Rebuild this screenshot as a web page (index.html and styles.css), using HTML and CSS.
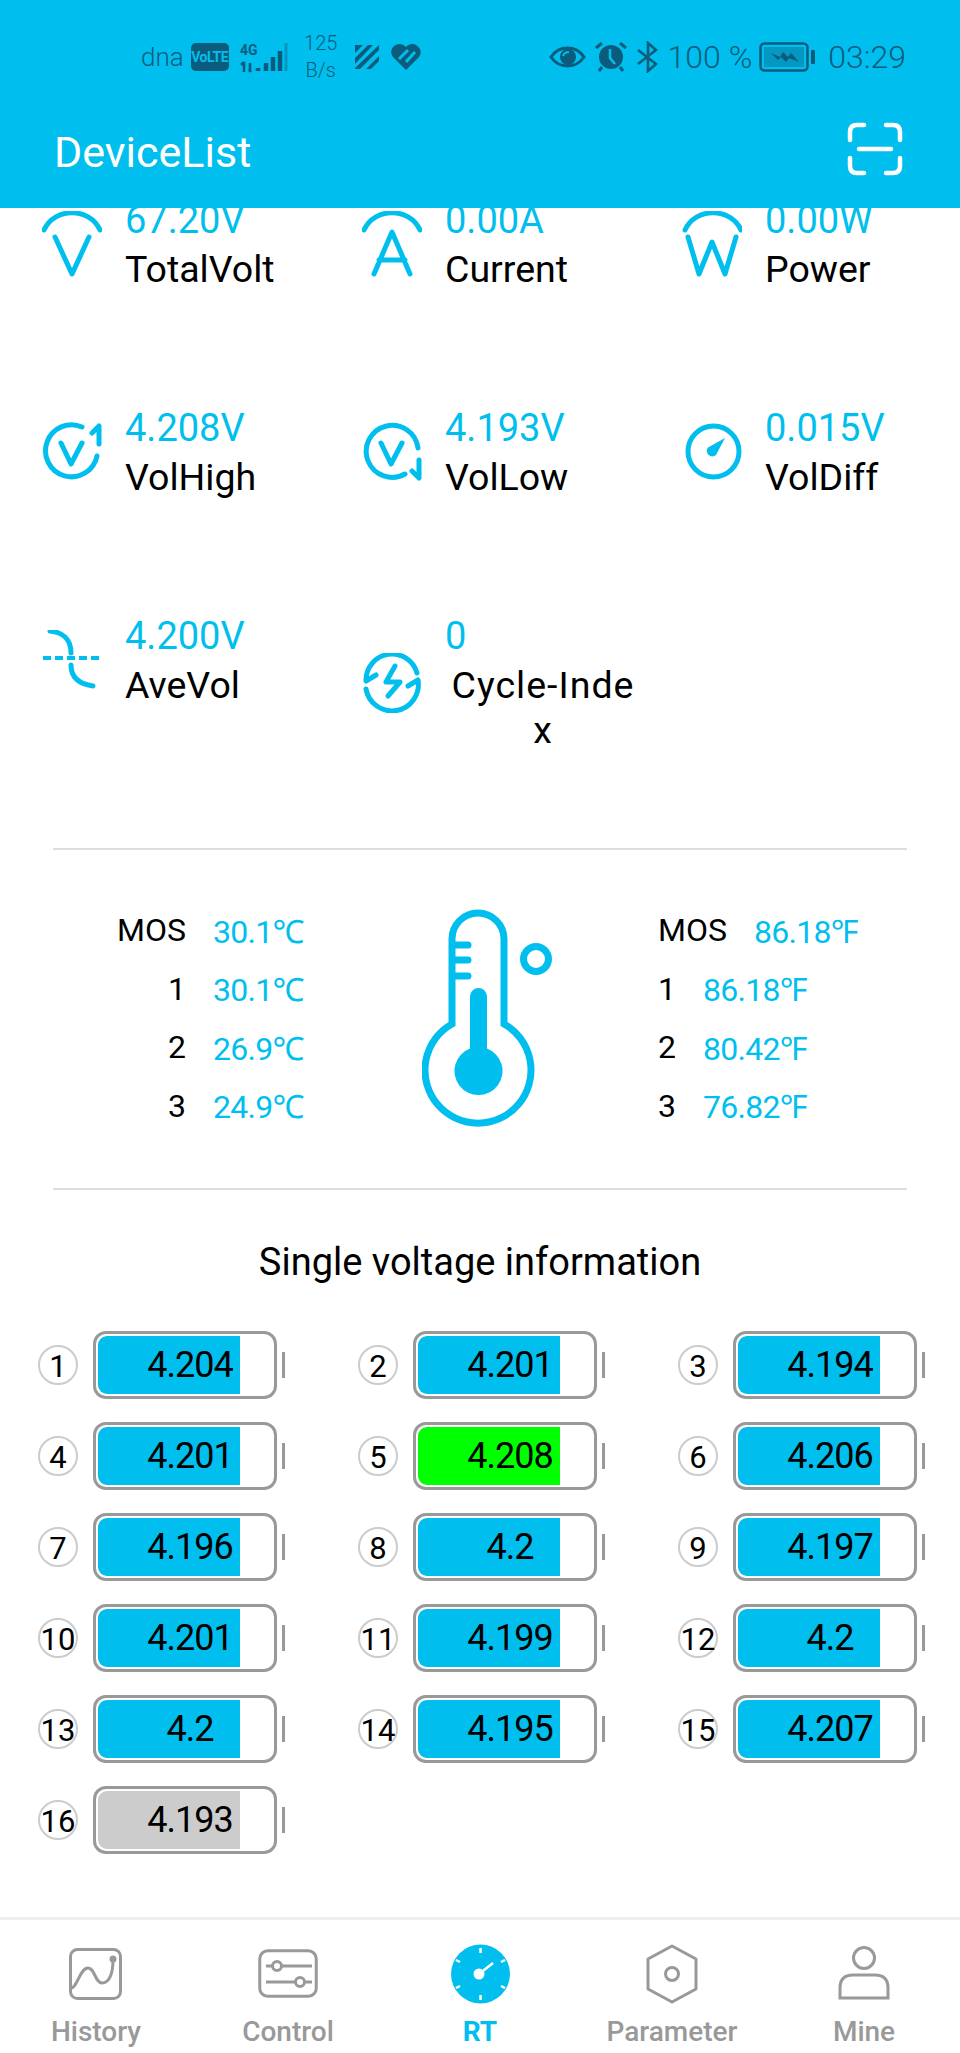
FILE: index.html
```html
<!DOCTYPE html>
<html lang="en">

<head>
  <meta charset="UTF-8">
  <meta name="viewport" content="width=device-width, initial-scale=1.0">
  <title>DeviceList</title>
  <link rel="stylesheet" href="styles.css">
</head>

<body>
  <div class="phone">
    <header class="top">
      <div class="status">
        <div class="status-left">
          <span class="carrier">dna</span>
          <span class="volte">VoLTE</span>
          <svg class="signal" width="48" height="32" viewBox="0 0 48 32">
            <text x="0" y="14" class="signal-4g">4G</text>
            <path d="M4 21v10M1 24l3-3M10 22v9M9 28l2 3" stroke="#0b5c7c" stroke-width="2.6" fill="none"/>
            <path d="M18 27v3M26 22v8M33 16v14M40 10v20" stroke="#0b5c7c" stroke-width="4.5" fill="none"/>
            <path d="M46 2v28" stroke="#0b5c7c" stroke-opacity=".4" stroke-width="3" fill="none"/>
          </svg>
          <span class="speed">125<br>B/s</span>
          <svg class="stripes" width="24" height="26" viewBox="0 0 24 26">
            <path d="M0 1h8L0 9zM13 1h5L0 20v-6zM24 1v5L5 25H0v-1zM24 12v5l-8 8h-5z" fill="#0b5c7c"/>
          </svg>
          <svg class="heart" width="30" height="26" viewBox="0 0 30 26">
            <path d="M15 26L2 13C-2 8 1 1 8 0c3 0 5 1 7 3 3-3 7-4 10-2 5 3 6 8 3 12z" fill="#0b5c7c"/>
            <path d="M17 6l-9 9M24 8l-9 10" stroke="#00bfee" stroke-width="3" fill="none"/>
          </svg>
        </div>
        <div class="status-right">
          <svg width="37" height="24" viewBox="0 0 37 24">
            <path d="M2 12C10 0 27 0 35 12 27 24 10 24 2 12z" fill="none" stroke="#0b5c7c" stroke-width="3"/>
            <circle cx="19" cy="12" r="8" fill="#0b5c7c"/>
            <path d="M14 11c1-3 3-4 6-4" stroke="#00bfee" stroke-width="2" fill="none"/>
          </svg>
          <svg width="32" height="30" viewBox="0 0 32 30">
            <circle cx="16" cy="15" r="12" fill="#0b5c7c"/>
            <path d="M15 7v9l5 6" stroke="#00bfee" stroke-width="2.5" fill="none"/>
            <path d="M1 6l6-5M31 6l-6-5M7 25l-3 4M25 25l3 4" stroke="#0b5c7c" stroke-width="3" fill="none"/>
          </svg>
          <svg width="23" height="32" viewBox="0 0 23 32">
            <path d="M2 9l18 14-8 7V2l8 7L2 23" fill="none" stroke="#0b5c7c" stroke-width="2.6"/>
          </svg>
          <span class="battery-pct">100 %</span>
          <svg class="battery-icon" width="56" height="30" viewBox="0 0 56 30">
            <rect x="1.5" y="1.5" width="47" height="27" rx="4" fill="none" stroke="#0b5c7c" stroke-width="2.5"/>
            <rect x="5" y="5" width="40" height="20" fill="#0b5c7c" fill-opacity=".4"/>
            <path d="M12 11l9 4 3-5 5 5 3-4 8 9-10-4-3 4-5-5-3 3z" fill="#0b5c7c"/>
            <rect x="52" y="8" width="4" height="14" rx="1" fill="#0b5c7c"/>
          </svg>
          <span class="clock">03:29</span>
        </div>
      </div>
      <div class="title-bar">
        <h1>DeviceList</h1>
        <svg class="scan" width="56" height="54" viewBox="0 0 56 54">
          <path d="M3 18V10q0-7 7-7h7M39 3h7q7 0 7 7v8M3 36v8q0 7 7 7h7M39 51h7q7 0 7-7v-8M12 27h32" fill="none" stroke="#fff" stroke-width="4.5" stroke-linecap="round"/>
        </svg>
      </div>
    </header>

    <main class="content">
      <section class="metrics">
        <div class="metric">
          <svg class="metric-icon" width="60" height="66" viewBox="0 0 60 66">
            <path d="M2 19C12-4 48-4 58 19M13 26l17 37 17-37" class="line"/>
          </svg>
          <div><div class="metric-value">67.20V</div><div class="metric-label">TotalVolt</div></div>
        </div>
        <div class="metric">
          <svg class="metric-icon" width="60" height="66" viewBox="0 0 60 66">
            <path d="M2 19C12-4 48-4 58 19M12 63L30 21l18 42M17 49h26" class="line"/>
          </svg>
          <div><div class="metric-value">0.00A</div><div class="metric-label">Current</div></div>
        </div>
        <div class="metric">
          <svg class="metric-icon" width="60" height="66" viewBox="0 0 60 66">
            <path d="M3 19C13-4 49-4 59 19M6 26l11 37 13-32 13 32 11-37" class="line"/>
          </svg>
          <div><div class="metric-value">0.00W</div><div class="metric-label">Power</div></div>
        </div>

        <div class="metric">
          <svg class="metric-icon" width="60" height="60" viewBox="0 0 60 60">
            <path d="M40 5A26 26 0 1 0 55 34M19 21l10 21 11-21M50 11l7-7v18" class="line"/>
          </svg>
          <div><div class="metric-value">4.208V</div><div class="metric-label">VolHigh</div></div>
        </div>
        <div class="metric">
          <svg class="metric-icon" width="60" height="60" viewBox="0 0 60 60">
            <path d="M56 26A26 26 0 1 0 43 52M19 21l10 21 11-21M50 49l7 7V38" class="line"/>
          </svg>
          <div><div class="metric-value">4.193V</div><div class="metric-label">VolLow</div></div>
        </div>
        <div class="metric">
          <svg class="metric-icon" width="60" height="60" viewBox="0 0 60 60">
            <circle cx="31.5" cy="29.5" r="25.5" class="line"/>
            <path d="M43 16L34 33A5.5 5.5 0 0 1 26 25.5z" fill="#00bfee"/>
          </svg>
          <div><div class="metric-value">0.015V</div><div class="metric-label">VolDiff</div></div>
        </div>

        <div class="metric">
          <svg class="metric-icon" width="60" height="60" viewBox="0 0 60 60">
            <path d="M8 1c12 1 21 8 21 22M29 35c0 12 8 19 22 21" class="line"/>
            <path d="M1 28h58" class="dash"/>
          </svg>
          <div><div class="metric-value">4.200V</div><div class="metric-label">AveVol</div></div>
        </div>
        <div class="metric">
          <svg class="metric-icon" width="60" height="60" viewBox="0 0 60 60">
            <path d="M14 22L4 28A26 26 0 0 1 55 20M46 33l10-6A26 26 0 0 1 4 36" class="line"/>
            <path d="M33 13l-9 16h14l-12 14" class="line"/>
          </svg>
          <div><div class="metric-value">0</div><div class="metric-label metric-label-wrap">Cycle-Inde<br>x</div></div>
        </div>
      </section>

      <section class="temps">
        <div class="temp-col temp-left">
          <div class="temp-row"><span class="temp-name">MOS</span><span class="temp-val">30.1℃</span></div>
          <div class="temp-row"><span class="temp-name">1</span><span class="temp-val">30.1℃</span></div>
          <div class="temp-row"><span class="temp-name">2</span><span class="temp-val">26.9℃</span></div>
          <div class="temp-row"><span class="temp-name">3</span><span class="temp-val">24.9℃</span></div>
        </div>
        <svg class="thermo" width="140" height="224" viewBox="0 0 140 224">
          <g fill="none" stroke="#00bfee" stroke-width="7">
            <path d="M30 116V31a26 26 0 0 1 52 0v85a53 53 0 1 1-52 0z"/>
            <circle cx="114" cy="51" r="12.5"/>
            <path d="M32 37h14M32 52h14M32 68h14" stroke-linecap="round"/>
          </g>
          <path d="M48 140.6V88.5a8.5 8.5 0 0 1 17 0V140.6a24 24 0 1 1-17 0z" fill="#00bfee"/>
        </svg>
        <div class="temp-col temp-right">
          <div class="temp-row"><span class="temp-name">MOS</span><span class="temp-val">86.18℉</span></div>
          <div class="temp-row"><span class="temp-name">1</span><span class="temp-val">86.18℉</span></div>
          <div class="temp-row"><span class="temp-name">2</span><span class="temp-val">80.42℉</span></div>
          <div class="temp-row"><span class="temp-name">3</span><span class="temp-val">76.82℉</span></div>
        </div>
      </section>

      <h2 class="cells-title">Single voltage information</h2>

      <section class="cells">
        <div class="cell"><span class="cell-no">1</span><div class="batt"><div class="batt-fill"></div><span class="batt-val">4.204</span></div><span class="batt-nub"></span></div>
        <div class="cell"><span class="cell-no">2</span><div class="batt"><div class="batt-fill"></div><span class="batt-val">4.201</span></div><span class="batt-nub"></span></div>
        <div class="cell"><span class="cell-no">3</span><div class="batt"><div class="batt-fill"></div><span class="batt-val">4.194</span></div><span class="batt-nub"></span></div>
        <div class="cell"><span class="cell-no">4</span><div class="batt"><div class="batt-fill"></div><span class="batt-val">4.201</span></div><span class="batt-nub"></span></div>
        <div class="cell"><span class="cell-no">5</span><div class="batt"><div class="batt-fill high"></div><span class="batt-val">4.208</span></div><span class="batt-nub"></span></div>
        <div class="cell"><span class="cell-no">6</span><div class="batt"><div class="batt-fill"></div><span class="batt-val">4.206</span></div><span class="batt-nub"></span></div>
        <div class="cell"><span class="cell-no">7</span><div class="batt"><div class="batt-fill"></div><span class="batt-val">4.196</span></div><span class="batt-nub"></span></div>
        <div class="cell"><span class="cell-no">8</span><div class="batt"><div class="batt-fill"></div><span class="batt-val">4.2</span></div><span class="batt-nub"></span></div>
        <div class="cell"><span class="cell-no">9</span><div class="batt"><div class="batt-fill"></div><span class="batt-val">4.197</span></div><span class="batt-nub"></span></div>
        <div class="cell"><span class="cell-no">10</span><div class="batt"><div class="batt-fill"></div><span class="batt-val">4.201</span></div><span class="batt-nub"></span></div>
        <div class="cell"><span class="cell-no">11</span><div class="batt"><div class="batt-fill"></div><span class="batt-val">4.199</span></div><span class="batt-nub"></span></div>
        <div class="cell"><span class="cell-no">12</span><div class="batt"><div class="batt-fill"></div><span class="batt-val">4.2</span></div><span class="batt-nub"></span></div>
        <div class="cell"><span class="cell-no">13</span><div class="batt"><div class="batt-fill"></div><span class="batt-val">4.2</span></div><span class="batt-nub"></span></div>
        <div class="cell"><span class="cell-no">14</span><div class="batt"><div class="batt-fill"></div><span class="batt-val">4.195</span></div><span class="batt-nub"></span></div>
        <div class="cell"><span class="cell-no">15</span><div class="batt"><div class="batt-fill"></div><span class="batt-val">4.207</span></div><span class="batt-nub"></span></div>
        <div class="cell"><span class="cell-no">16</span><div class="batt"><div class="batt-fill low"></div><span class="batt-val">4.193</span></div><span class="batt-nub"></span></div>
      </section>
    </main>

    <nav class="tabs">
      <div class="tab">
        <svg width="64" height="60" viewBox="0 0 64 60" class="tab-icon">
          <rect x="6.5" y="5.5" width="50" height="49" rx="7"/>
          <path d="M7 44C13 44 16 24 24 24C31 24 31 39 38 39C46 39 49 28 49 16"/>
          <circle cx="49" cy="15" r="2" fill="#999"/>
        </svg>
        <span>History</span>
      </div>
      <div class="tab">
        <svg width="64" height="60" viewBox="0 0 64 60" class="tab-icon">
          <rect x="3.75" y="6.75" width="56.5" height="45.5" rx="8"/>
          <path d="M10 22h46M10 38h46"/>
          <circle cx="21" cy="22" r="4.5" fill="#fff"/>
          <circle cx="44" cy="38" r="4.5" fill="#fff"/>
        </svg>
        <span>Control</span>
      </div>
      <div class="tab tab-active">
        <svg width="64" height="60" viewBox="0 0 64 60">
          <circle cx="32.5" cy="30" r="29.5" fill="#00bfee"/>
          <path d="M32.5 4v5M32.5 51v5M8 16l4 2M57 16l-4 2M8 44l4-2M57 44l-4-2" stroke="#fff" stroke-width="2.5" fill="none"/>
          <circle cx="31" cy="30" r="5.5" fill="#fff"/>
          <path d="M31 30l14-11" stroke="#fff" stroke-width="2.5" fill="none"/>
        </svg>
        <span>RT</span>
      </div>
      <div class="tab">
        <svg width="64" height="60" viewBox="0 0 64 60" class="tab-icon">
          <path d="M32 2l24 13v30L32 58 8 45V15z" stroke-linejoin="round"/>
          <circle cx="32" cy="30" r="6.5"/>
        </svg>
        <span>Parameter</span>
      </div>
      <div class="tab">
        <svg width="64" height="60" viewBox="0 0 64 60" class="tab-icon">
          <circle cx="32" cy="14" r="10.5"/>
          <path d="M8 54V44q0-13 13-13h22q13 0 13 13v10z"/>
        </svg>
        <span>Mine</span>
      </div>
    </nav>
  </div>
</body>

</html>
```

FILE: styles.css
```css
* {
  box-sizing: border-box;
}

html,
body {
  margin: 0;
  padding: 0;
}

body {
  font-family: Roboto, "Noto Sans", sans-serif;
  background-color: #fff;
  color: #000;
}

.phone {
  width: 960px;
  height: 2053px;
  display: flex;
  flex-direction: column;
  overflow: hidden;
}

/* top bar */
.top {
  height: 208px;
  flex: none;
  background-color: #00bfee;
  position: relative;
  z-index: 1;
}

.status {
  height: 114px;
  padding: 0 54px 0 141px;
  display: flex;
  align-items: center;
  justify-content: space-between;
  color: #0b5c7c;
}

.status-left,
.status-right {
  display: flex;
  align-items: center;
}

.carrier {
  font-size: 26px;
  font-weight: 300;
  margin-right: 7px;
}

.volte {
  width: 38px;
  height: 28px;
  border-radius: 5px;
  background-color: #0b5c7c;
  color: #00bfee;
  font-size: 14px;
  font-weight: 700;
  letter-spacing: -0.5px;
  line-height: 28px;
  text-align: center;
  margin-right: 11px;
}

.signal-4g {
  font-size: 14px;
  font-weight: 700;
  fill: #0b5c7c;
}

.speed {
  width: 40px;
  font-size: 20px;
  font-weight: 300;
  line-height: 27px;
  text-align: center;
  margin: 0 14px 0 13px;
}

.heart {
  margin-left: 12px;
}

.status-right {
  gap: 9px;
}

.battery-pct {
  font-size: 32px;
  font-weight: 300;
}

.battery-icon {
  margin-left: -2px;
}

.clock {
  font-size: 32px;
  font-weight: 300;
  margin-left: 4px;
}

.title-bar {
  height: 94px;
  padding: 0 57px 0 54px;
  display: flex;
  align-items: flex-start;
  justify-content: space-between;
  color: #fff;
}

.title-bar h1 {
  margin: 0;
  font-size: 43px;
  font-weight: 400;
  line-height: 50px;
  padding-top: 13px;
}

.scan {
  margin-top: 8px;
}

/* scrolled content, first row goes under the top bar */
.content {
  flex: 1;
  overflow: hidden;
}

.metrics {
  margin-top: -12px;
  display: grid;
  grid-template-columns: repeat(3, 320px);
  grid-auto-rows: 208px;
  height: 652px;
}

.metric {
  padding-left: 42px;
  display: flex;
  align-items: center;
  gap: 23px;
  align-self: start;
}

.metric-icon {
  flex: none;
}

.line {
  fill: none;
  stroke: #00bfee;
  stroke-width: 5;
  stroke-linecap: round;
  stroke-linejoin: round;
}

.dash {
  fill: none;
  stroke: #00bfee;
  stroke-width: 4;
  stroke-dasharray: 8 4;
}

.metric-value {
  font-size: 38px;
  line-height: 48px;
  color: #00bfee;
  margin-bottom: 3px;
}

.metric-label {
  font-size: 37.5px;
  line-height: 45px;
}

.metric-label-wrap {
  width: 196px;
  text-align: center;
  letter-spacing: 1px;
}

/* temperatures */
.temps {
  margin: 0 53px;
  height: 342px;
  border-top: 2px solid #ddd;
  border-bottom: 2px solid #ddd;
  display: flex;
  align-items: center;
}

.temp-col {
  display: flex;
  flex-direction: column;
  padding-bottom: 2px;
}

.temp-row {
  display: flex;
  height: 58.5px;
  align-items: center;
  font-size: 32px;
}

.temp-val {
  color: #00bfee;
  letter-spacing: -0.7px;
}

.temp-left {
  width: 300px;
}

.temp-left .temp-name {
  width: 133px;
  text-align: right;
  margin-right: 27px;
}

.temp-right {
  margin-left: 96px;
}

.temp-right .temp-name {
  margin-right: 27px;
}

.thermo {
  flex: none;
  margin-left: 69px;
  margin-top: 2px;
}

.cells-title {
  margin: 0;
  height: 141px;
  padding-top: 47px;
  font-size: 38px;
  font-weight: 400;
  line-height: 50px;
  text-align: center;
}

/* cell voltages */
.cells {
  display: grid;
  grid-template-columns: repeat(3, 320px);
  grid-auto-rows: 91px;
  padding-left: 38px;
  margin-right: -38px;
}

.cell {
  display: flex;
  align-items: center;
  height: 68px;
}

.cell-no {
  width: 40px;
  height: 40px;
  border: 2.5px solid #ccc;
  border-radius: 50%;
  font-size: 31px;
  padding-top: 3px;
  display: flex;
  align-items: center;
  justify-content: center;
  margin-right: 15px;
  flex: none;
}

.batt {
  width: 184px;
  height: 68px;
  border: 3px solid #999;
  border-radius: 13px;
  padding: 2px;
  position: relative;
  flex: none;
}

.batt-fill {
  width: 142px;
  height: 100%;
  background-color: #00bfee;
  border-radius: 9px 0 0 9px;
}

.batt-fill.high {
  background-color: #00ff00;
}

.batt-fill.low {
  background-color: #cccccc;
}

.batt-val {
  position: absolute;
  top: 0;
  bottom: 0;
  left: 10px;
  right: 0;
  display: flex;
  align-items: center;
  justify-content: center;
  font-size: 36px;
  letter-spacing: -1px;
}

.batt-nub {
  width: 3px;
  height: 26px;
  background-color: #999;
  margin-left: 5px;
}

/* bottom tabs */
.tabs {
  height: 136px;
  flex: none;
  border-top: 3px solid #eee;
  display: flex;
  color: #999;
}

.tab {
  width: 192px;
  display: flex;
  flex-direction: column;
  align-items: center;
  font-size: 28px;
  font-weight: 500;
  line-height: 36px;
  padding-top: 24px;
}

.tab svg {
  margin-bottom: 10px;
}

.tab-icon {
  fill: none;
  stroke: #999;
  stroke-width: 3;
}

.tab-active {
  color: #00bfee;
  font-weight: 700;
}
```
